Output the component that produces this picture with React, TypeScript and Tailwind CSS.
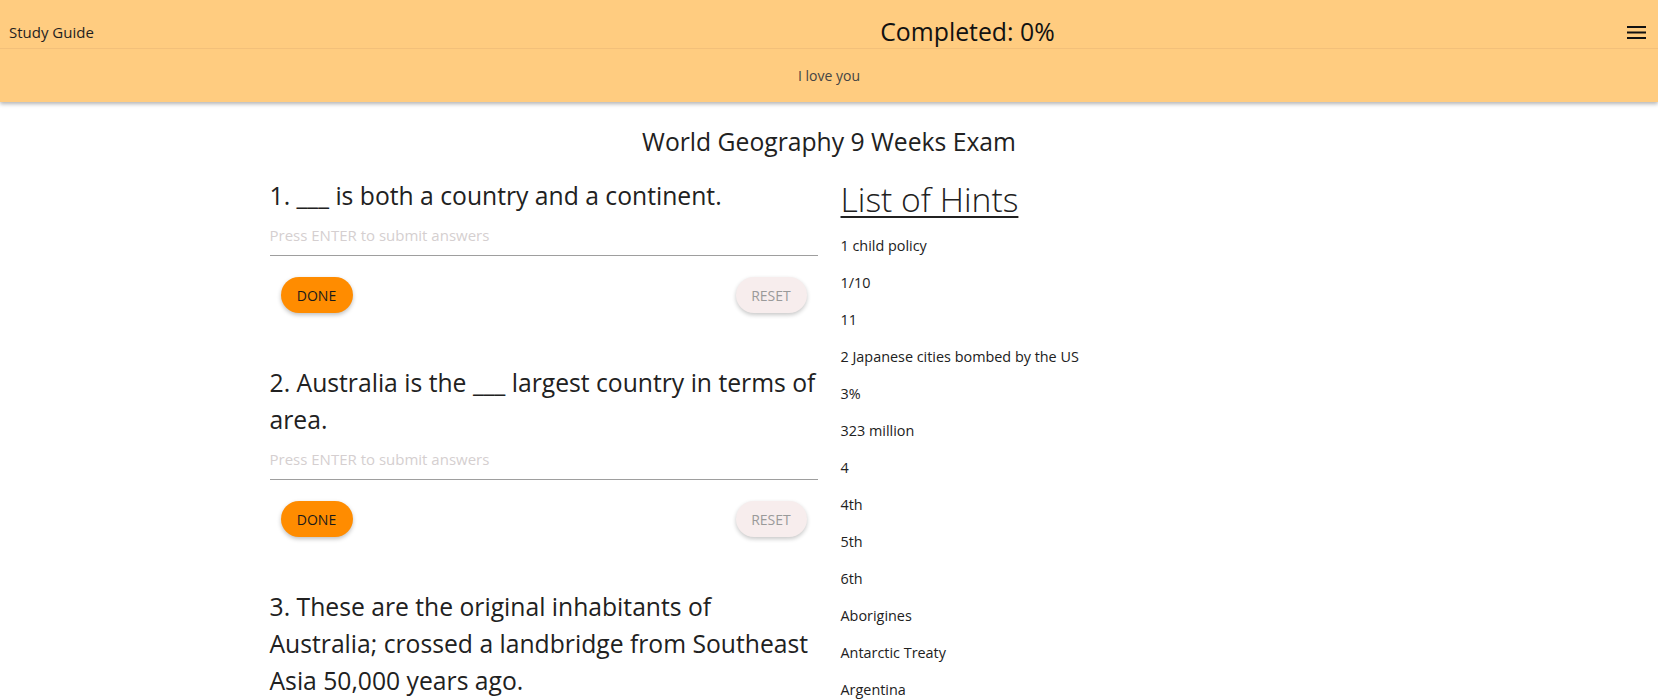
import { useState } from "react";

const questions = [
  { id: 1, text: "___ is both a country and a continent." },
  { id: 2, text: "Australia is the ___ largest country in terms of area." },
  {
    id: 3,
    text: "These are the original inhabitants of Australia; crossed a landbridge from Southeast Asia 50,000 years ago.",
  },
  { id: 4, text: "This is the largest city in Australia." },
];

const hints = [
  "1 child policy",
  "1/10",
  "11",
  "2 Japanese cities bombed by the US",
  "3%",
  "323 million",
  "4",
  "4th",
  "5th",
  "6th",
  "Aborigines",
  "Antarctic Treaty",
  "Argentina",
  "Asia",
  "Australia",
  "Brazil",
];

function Question({ id, text }: { id: number; text: string }) {
  const [value, setValue] = useState("");

  return (
    <div className="mb-[51px]">
      <h3 className="text-[24.7px] leading-[37px] text-[#212121]">
        {id}. {text}
      </h3>
      <input
        value={value}
        onChange={(e) => setValue(e.target.value)}
        placeholder="Press ENTER to submit answers"
        className="block h-[42px] w-full border-b border-[#9e9e9e] bg-transparent text-[15px] text-[#212121] outline-none placeholder:text-[#d5cfd0]"
      />
      <div className="mt-[21px] flex items-center justify-between px-[11px]">
        <button
          type="button"
          className="h-9 w-[72px] rounded-full bg-[#ff8c00] text-[14px] uppercase text-[#1a1a1a] shadow-[0_2px_4px_rgba(0,0,0,0.25)]"
        >
          Done
        </button>
        <button
          type="button"
          onClick={() => setValue("")}
          className="h-9 w-[71px] rounded-full bg-[#f7eded] text-[14px] uppercase text-[#9a9a9a] shadow-[0_2px_4px_rgba(0,0,0,0.22)]"
        >
          Reset
        </button>
      </div>
    </div>
  );
}

export default function App() {
  return (
    <div className="min-h-screen bg-white font-['Open_Sans',sans-serif] text-[#212121]">
      <header className="bg-[#ffcc80] shadow-[0_2px_4px_rgba(0,0,0,0.3)]">
        <div className="flex h-[49px] items-center border-b border-[#f3c07a] pl-[9px] pr-3 pt-4">
          <span className="text-[15px] text-[#1f1f1f]">Study Guide</span>
          <div className="flex-1 pl-[215px] text-center text-[24.8px] text-[#111]">Completed: 0%</div>
          <button type="button" aria-label="Menu" className="flex h-5 w-5 items-center justify-center">
            <svg width="19" height="13" viewBox="0 0 19 13">
              <rect x="0" y="0" width="19" height="2" fill="#111" />
              <rect x="0" y="5.5" width="19" height="2" fill="#111" />
              <rect x="0" y="11" width="19" height="2" fill="#111" />
            </svg>
          </button>
        </div>
        <div className="flex h-[53px] items-center justify-center text-[14px] text-[#444]">I love you</div>
      </header>

      <main className="mx-auto w-[1119px] pt-[21px]">
        <h2 className="text-center text-[24.7px] leading-[37px] text-[#212121]">World Geography 9 Weeks Exam</h2>
        <div className="mt-[17px] grid grid-cols-2 gap-x-[23px]">
          <div>
            {questions.map((q) => (
              <Question key={q.id} id={q.id} text={q.text} />
            ))}
          </div>
          <div>
            <h3 className="text-[33.7px] font-light leading-[44px] underline decoration-[2px] underline-offset-[4px]">
              List of Hints
            </h3>
            <ul className="mt-[6px]">
              {hints.map((h) => (
                <li key={h} className="flex h-[37px] items-center text-[14.4px] text-[#212121]">
                  {h}
                </li>
              ))}
            </ul>
          </div>
        </div>
      </main>
    </div>
  );
}
